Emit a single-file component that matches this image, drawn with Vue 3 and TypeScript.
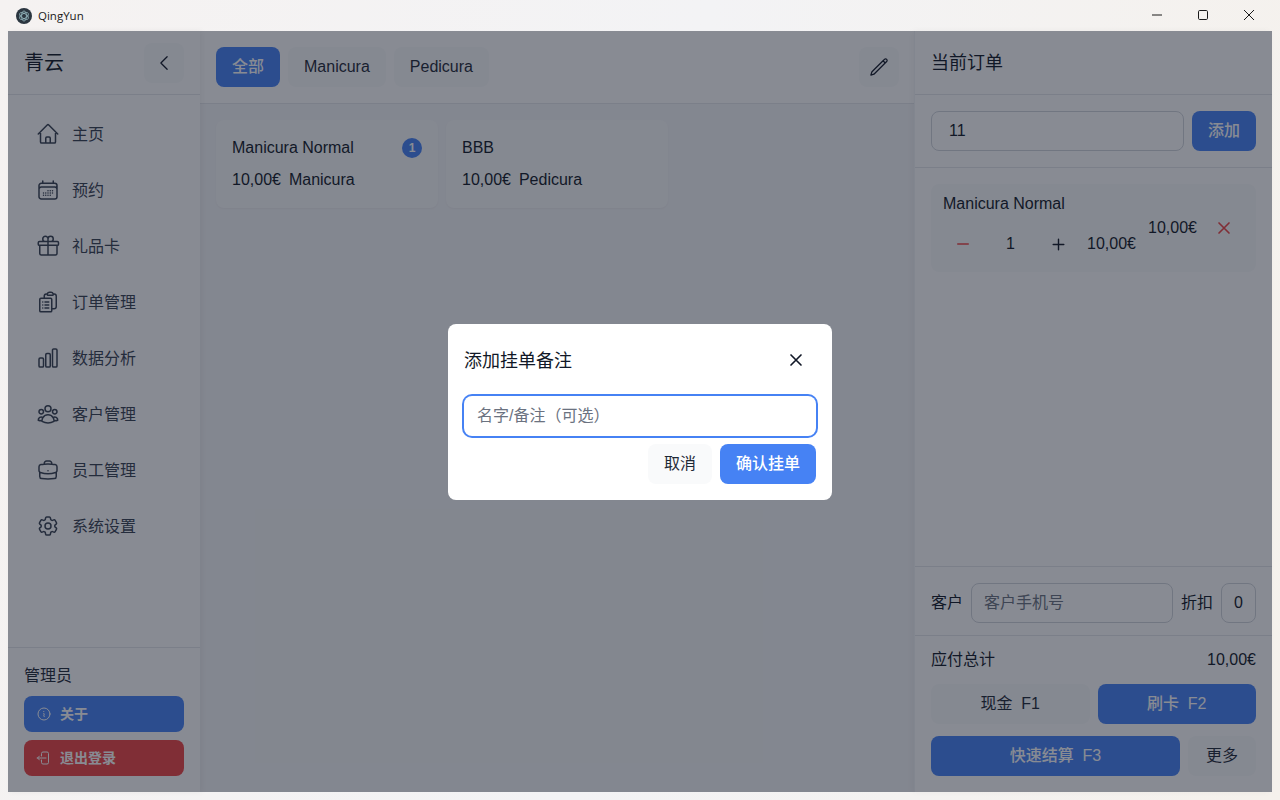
<template>
  <div class="window">
    <div class="titlebar">
      <svg class="logo" viewBox="0 0 16 16">
        <circle cx="8" cy="8" r="8" fill="#2b3640" />
        <g fill="none" stroke="#9fc4cc" stroke-width="0.7">
          <ellipse cx="8" cy="8" rx="5" ry="2.4" transform="rotate(30 8 8)" />
          <ellipse cx="8" cy="8" rx="5" ry="2.4" transform="rotate(90 8 8)" />
          <ellipse cx="8" cy="8" rx="5" ry="2.4" transform="rotate(150 8 8)" />
        </g>
      </svg>
      <span class="app-name">QingYun</span>
      <div class="win-controls">
        <svg viewBox="0 0 12 12"><path d="M1 6h10" /></svg>
        <svg viewBox="0 0 12 12"><rect x="1.5" y="1.5" width="9" height="9" rx="1.2" /></svg>
        <svg viewBox="0 0 12 12"><path d="M1 1l10 10M11 1 1 11" /></svg>
      </div>
    </div>

    <div class="app">
      <aside class="sidebar">
        <div class="side-head">
          <span class="brand">青云</span>
          <button class="icon-btn">
            <svg class="ico i20" viewBox="0 0 24 24"><path :d="icons.chevron" /></svg>
          </button>
        </div>
        <nav class="nav">
          <a v-for="item in navItems" :key="item.label" class="nav-item">
            <svg class="ico i24" viewBox="0 0 24 24"><path :d="item.icon" /></svg>
            <span class="tx">{{ item.label }}</span>
          </a>
        </nav>
        <div class="side-foot">
          <div class="role">管理员</div>
          <button class="foot-btn blue">
            <svg class="ico i16" viewBox="0 0 24 24"><path :d="icons.info" /></svg>
            <span class="tx">关于</span>
          </button>
          <button class="foot-btn red">
            <svg class="ico i16" viewBox="0 0 24 24"><path :d="icons.logout" /></svg>
            <span class="tx">退出登录</span>
          </button>
        </div>
      </aside>

      <main class="main">
        <div class="tabs">
          <button class="chip active">全部</button>
          <button class="chip">Manicura</button>
          <button class="chip">Pedicura</button>
          <button class="icon-btn push">
            <svg class="ico i20" viewBox="0 0 24 24"><path :d="icons.pencil" /></svg>
          </button>
        </div>
        <div class="grid">
          <div v-for="p in products" :key="p.name" class="card">
            <div class="card-title">
              <span>{{ p.name }}</span>
              <span v-if="p.count" class="badge">{{ p.count }}</span>
            </div>
            <div class="card-sub">
              <span>{{ p.price }}</span>
              <span>{{ p.category }}</span>
            </div>
          </div>
        </div>
      </main>

      <section class="order">
        <div class="order-head">当前订单</div>
        <div class="add-row">
          <div class="field grow val">11</div>
          <button class="btn primary w64">添加</button>
        </div>
        <div class="order-list">
          <div class="line">
            <div class="line-left">
              <div class="line-name">Manicura Normal</div>
              <div class="qty">
                <span class="qty-btn danger">
                  <svg class="ico i18 bold" viewBox="0 0 24 24"><path :d="icons.minus" /></svg>
                </span>
                <span class="qty-val">1</span>
                <span class="qty-btn">
                  <svg class="ico i17 bold" viewBox="0 0 24 24"><path :d="icons.plus" /></svg>
                </span>
                <span class="unit">10,00€</span>
              </div>
            </div>
            <span class="line-total">10,00€</span>
            <span class="qty-btn danger">
              <svg class="ico i20 bold" viewBox="0 0 24 24"><path :d="icons.close" /></svg>
            </span>
          </div>
        </div>
        <div class="cust-row">
          <span class="lift">客户</span>
          <div class="field grow hint">客户手机号</div>
          <span class="lift">折扣</span>
          <div class="field small">0</div>
        </div>
        <div class="pay">
          <div class="total">
            <span>应付总计</span>
            <span>10,00€</span>
          </div>
          <div class="pay-row even">
            <button class="btn ghost">现金&nbsp;&nbsp;F1</button>
            <button class="btn primary">刷卡&nbsp;&nbsp;F2</button>
          </div>
          <div class="pay-row">
            <button class="btn primary grow">快速结算&nbsp;&nbsp;F3</button>
            <button class="btn ghost w68">更多</button>
          </div>
        </div>
      </section>

      <div class="overlay">
        <div class="dialog">
          <div class="dialog-head">
            <span class="tx">添加挂单备注</span>
            <button class="close-btn">
              <svg class="ico i20 bold" viewBox="0 0 24 24"><path :d="icons.close" /></svg>
            </button>
          </div>
          <input class="note" placeholder="名字/备注（可选）" />
          <div class="dialog-foot">
            <button class="btn ghost w64">取消</button>
            <button class="btn primary w96">确认挂单</button>
          </div>
        </div>
      </div>
    </div>
  </div>
</template>

<script setup lang="ts">
const icons = {
  chevron: 'M15.75 19.5 8.25 12l7.5-7.5',
  pencil:
    'm16.862 4.487 1.687-1.688a1.875 1.875 0 1 1 2.652 2.652L6.832 19.82a4.5 4.5 0 0 1-1.897 1.13l-2.685.8.8-2.685a4.5 4.5 0 0 1 1.13-1.897L16.863 4.487Zm0 0L19.5 7.125',
  close: 'M6 18 18 6M6 6l12 12',
  minus: 'M5 12h14',
  plus: 'M12 4.5v15m7.5-7.5h-15',
  info: 'm11.25 11.25.041-.02a.75.75 0 0 1 1.063.852l-.708 2.836a.75.75 0 0 0 1.063.853l.041-.021M21 12a9 9 0 1 1-18 0 9 9 0 0 1 18 0Zm-9-3.75h.008v.008H12V8.25Z',
  logout:
    'M8.25 9V5.25A2.25 2.25 0 0 1 10.5 3h6a2.25 2.25 0 0 1 2.25 2.25v13.5A2.25 2.25 0 0 1 16.5 21h-6a2.25 2.25 0 0 1-2.25-2.25V15m-3 0-3-3m0 0 3-3m-3 3H15',
}

const navItems = [
  {
    label: '主页',
    icon: 'm2.25 12 8.954-8.955c.44-.439 1.152-.439 1.591 0L21.75 12M4.5 9.75v10.125c0 .621.504 1.125 1.125 1.125H9.75v-4.875c0-.621.504-1.125 1.125-1.125h2.25c.621 0 1.125.504 1.125 1.125V21h4.125c.621 0 1.125-.504 1.125-1.125V9.75M8.25 21h8.25',
  },
  {
    label: '预约',
    icon: 'M6.75 3v2.25M17.25 3v2.25M3 18.75V7.5a2.25 2.25 0 0 1 2.25-2.25h13.5A2.25 2.25 0 0 1 21 7.5v11.25m-18 0A2.25 2.25 0 0 0 5.25 21h13.5A2.25 2.25 0 0 0 21 18.75m-18 0v-7.5A2.25 2.25 0 0 1 5.25 9h13.5A2.25 2.25 0 0 1 21 11.25v7.5m-9-6h.008v.008H12v-.008ZM12 15h.008v.008H12V15Zm0 2.25h.008v.008H12v-.008ZM9.75 15h.008v.008H9.75V15Zm0 2.25h.008v.008H9.75v-.008ZM7.5 15h.008v.008H7.5V15Zm0 2.25h.008v.008H7.5v-.008Zm6.75-4.5h.008v.008h-.008v-.008Zm0 2.25h.008v.008h-.008V15Zm0 2.25h.008v.008h-.008v-.008Zm2.25-4.5h.008v.008H16.5v-.008Zm0 2.25h.008v.008H16.5V15Z',
  },
  {
    label: '礼品卡',
    icon: 'M21 11.25v8.25a1.5 1.5 0 0 1-1.5 1.5H5.25a1.5 1.5 0 0 1-1.5-1.5v-8.25M12 4.875A2.625 2.625 0 1 0 9.375 7.5H12m0-2.625V7.5m0-2.625A2.625 2.625 0 1 1 14.625 7.5H12m0 0V21m-8.625-9.75h18c.621 0 1.125-.504 1.125-1.125v-1.5c0-.621-.504-1.125-1.125-1.125h-18c-.621 0-1.125.504-1.125 1.125v1.5c0 .621.504 1.125 1.125 1.125Z',
  },
  {
    label: '订单管理',
    icon: 'M9 12h3.75M9 15h3.75M9 18h3.75m3 .75H18a2.25 2.25 0 0 0 2.25-2.25V6.108c0-1.135-.845-2.098-1.976-2.192a48.424 48.424 0 0 0-1.123-.08m-5.801 0c-.065.21-.1.433-.1.664 0 .414.336.75.75.75h4.5a.75.75 0 0 0 .75-.75 2.25 2.25 0 0 0-.1-.664m-5.8 0A2.251 2.251 0 0 1 13.5 2.25H15c1.012 0 1.867.668 2.15 1.586m-5.8 0c-.376.023-.75.05-1.124.08C9.095 4.01 8.25 4.973 8.25 6.108V8.25m0 0H4.875c-.621 0-1.125.504-1.125 1.125v11.25c0 .621.504 1.125 1.125 1.125h9.75c.621 0 1.125-.504 1.125-1.125V9.375c0-.621-.504-1.125-1.125-1.125H8.25ZM6.75 12h.008v.008H6.75V12Zm0 3h.008v.008H6.75V15Zm0 3h.008v.008H6.75V18Z',
  },
  {
    label: '数据分析',
    icon: 'M3 13.125C3 12.504 3.504 12 4.125 12h2.25c.621 0 1.125.504 1.125 1.125v6.75C7.5 20.496 6.996 21 6.375 21h-2.25A1.125 1.125 0 0 1 3 19.875v-6.75ZM9.75 8.625c0-.621.504-1.125 1.125-1.125h2.25c.621 0 1.125.504 1.125 1.125v11.25c0 .621-.504 1.125-1.125 1.125h-2.25a1.125 1.125 0 0 1-1.125-1.125V8.625ZM16.5 4.125c0-.621.504-1.125 1.125-1.125h2.25C20.496 3 21 3.504 21 4.125v15.75c0 .621-.504 1.125-1.125 1.125h-2.25a1.125 1.125 0 0 1-1.125-1.125V4.125Z',
  },
  {
    label: '客户管理',
    icon: 'M18 18.72a9.094 9.094 0 0 0 3.741-.479 3 3 0 0 0-4.682-2.72m.94 3.198.001.031c0 .225-.012.447-.037.666A11.944 11.944 0 0 1 12 21c-2.17 0-4.207-.576-5.963-1.584A6.062 6.062 0 0 1 6 18.719m12 0a5.971 5.971 0 0 0-.941-3.197m0 0A5.995 5.995 0 0 0 12 12.75a5.995 5.995 0 0 0-5.058 2.772m0 0a3 3 0 0 0-4.681 2.72 8.986 8.986 0 0 0 3.74.477m.94-3.197a5.971 5.971 0 0 0-.94 3.197M15 6.75a3 3 0 1 1-6 0 3 3 0 0 1 6 0Zm6 3a2.25 2.25 0 1 1-4.5 0 2.25 2.25 0 0 1 4.5 0Zm-13.5 0a2.25 2.25 0 1 1-4.5 0 2.25 2.25 0 0 1 4.5 0Z',
  },
  {
    label: '员工管理',
    icon: 'M20.25 14.15v4.25c0 1.094-.787 2.036-1.872 2.18-2.087.277-4.216.42-6.378.42s-4.291-.143-6.378-.42c-1.085-.144-1.872-1.086-1.872-2.18v-4.25m16.5 0a2.18 2.18 0 0 0 .75-1.661V8.706c0-1.081-.768-2.015-1.837-2.175a48.114 48.114 0 0 0-3.413-.387m4.5 8.006c-.194.165-.42.295-.673.38A23.978 23.978 0 0 1 12 15.75c-2.648 0-5.195-.429-7.577-1.22a2.016 2.016 0 0 1-.673-.38m0 0A2.18 2.18 0 0 1 3 12.489V8.706c0-1.081.768-2.015 1.837-2.175a48.111 48.111 0 0 1 3.413-.387m7.5 0V5.25A2.25 2.25 0 0 0 13.5 3h-3a2.25 2.25 0 0 0-2.25 2.25v.894m7.5 0a48.667 48.667 0 0 0-7.5 0M12 12.75h.008v.008H12v-.008Z',
  },
  {
    label: '系统设置',
    icon: 'M9.594 3.94c.09-.542.56-.94 1.11-.94h2.593c.55 0 1.02.398 1.11.94l.213 1.281c.063.374.313.686.645.87.074.04.147.083.22.127.325.196.72.257 1.075.124l1.217-.456a1.125 1.125 0 0 1 1.37.49l1.296 2.247a1.125 1.125 0 0 1-.26 1.431l-1.003.827c-.293.241-.438.613-.43.992a7.723 7.723 0 0 1 0 .255c-.008.378.137.75.43.991l1.004.827c.424.35.534.955.26 1.43l-1.298 2.247a1.125 1.125 0 0 1-1.369.491l-1.217-.456c-.355-.133-.75-.072-1.076.124a6.47 6.47 0 0 1-.22.128c-.331.183-.581.495-.644.869l-.213 1.281c-.09.543-.56.94-1.11.94h-2.594c-.55 0-1.019-.398-1.11-.94l-.213-1.281c-.062-.374-.312-.686-.644-.87a6.52 6.52 0 0 1-.22-.127c-.325-.196-.72-.257-1.076-.124l-1.217.456a1.125 1.125 0 0 1-1.369-.49l-1.297-2.247a1.125 1.125 0 0 1 .26-1.431l1.004-.827c.292-.24.437-.613.43-.991a6.932 6.932 0 0 1 0-.255c.007-.38-.138-.751-.43-.992l-1.004-.827a1.125 1.125 0 0 1-.26-1.43l1.297-2.247a1.125 1.125 0 0 1 1.37-.491l1.216.456c.356.133.751.072 1.076-.124.072-.044.146-.086.22-.128.332-.183.582-.495.644-.869l.214-1.28Z M15 12a3 3 0 1 1-6 0 3 3 0 0 1 6 0Z',
  },
]

const products = [
  { name: 'Manicura Normal', price: '10,00€', category: 'Manicura', count: 1 },
  { name: 'BBB', price: '10,00€', category: 'Pedicura', count: 0 },
]
</script>

<style scoped>
.window {
  height: 800px;
  display: flex;
  flex-direction: column;
  padding: 0 8px 8px;
  box-sizing: border-box;
  background: linear-gradient(100deg, #f5f2f1 0%, #f3f3f5 50%, #f5f1ec 100%);
  color: #111827;
  font-family: "Liberation Sans", "Noto Sans CJK SC", sans-serif;
  font-size: 16px;
  overflow: hidden;
}

.titlebar {
  height: 31px;
  flex: none;
  display: flex;
  align-items: center;
  padding-left: 8px;
}
.logo {
  width: 16px;
  height: 16px;
}
.app-name {
  margin-left: 6px;
  font: 11.5px "Open Sans", sans-serif;
  color: #1a1a1a;
}
.win-controls {
  margin-left: auto;
  display: flex;
}
.win-controls svg {
  width: 46px;
  height: 12px;
  margin-top: -1px;
  fill: none;
  stroke: #1a1a1a;
  stroke-width: 1;
}

.app {
  position: relative;
  flex: 1;
  min-height: 0;
  display: flex;
  background: #fff;
}

.ico {
  fill: none;
  stroke: currentColor;
  stroke-width: 1.5;
  stroke-linecap: round;
  stroke-linejoin: round;
  flex: none;
}
.ico.bold {
  stroke-width: 2;
}
.i16 { width: 16px; height: 16px; }
.i17 { width: 17px; height: 17px; }
.i18 { width: 18px; height: 18px; }
.i20 { width: 20px; height: 20px; }
.i24 { width: 24px; height: 24px; }

/* CJK 字形比 Latin 偏低，往上提一点 */
.tx { margin-bottom: 2px; }
.lift { margin-bottom: 4px; }

button {
  border: 0;
  font: inherit;
  padding: 0;
  color: inherit;
}

.sidebar {
  position: relative;
  z-index: 1;
  width: 192px;
  flex: none;
  display: flex;
  flex-direction: column;
  box-sizing: border-box;
  background: #fff;
  box-shadow: 2px 0 6px rgba(0, 0, 0, 0.05);
}
.side-head {
  height: 64px;
  flex: none;
  box-sizing: border-box;
  display: flex;
  align-items: center;
  justify-content: space-between;
  padding: 0 16px;
  border-bottom: 1px solid #e5e7eb;
}
.brand {
  font-size: 20px;
  margin-bottom: 2px;
}
.icon-btn {
  width: 40px;
  height: 40px;
  border-radius: 8px;
  background: #f9fafb;
  display: flex;
  align-items: center;
  justify-content: center;
}
.nav {
  flex: 1;
  padding: 15px 8px 0;
  display: flex;
  flex-direction: column;
  gap: 8px;
}
.nav-item {
  height: 48px;
  display: flex;
  align-items: center;
  gap: 12px;
  padding: 0 20px;
  color: #374151;
}
.side-foot {
  border-top: 1px solid #e5e7eb;
  padding: 16px;
  display: flex;
  flex-direction: column;
  gap: 8px;
}
.role {
  line-height: 24px;
  height: 24px;
  color: #1f2937;
}
.foot-btn {
  height: 36px;
  border-radius: 8px;
  display: flex;
  align-items: center;
  gap: 8px;
  padding: 0 12px;
  color: #fff;
  font-size: 14px;
  font-weight: 700;
}
.foot-btn.blue { background: #4682f4; }
.foot-btn.red { background: #ef4444; }

.main {
  flex: 1;
  min-width: 0;
  display: flex;
  flex-direction: column;
  background: #f5f6f8;
}
.tabs {
  height: 73px;
  flex: none;
  box-sizing: border-box;
  padding: 0 15px 0 16px;
  display: flex;
  align-items: center;
  gap: 8px;
  background: #fff;
  border-bottom: 1px solid #e5e7eb;
}
.push {
  margin-left: auto;
}
.chip {
  height: 40px;
  padding: 0 16px;
  border-radius: 8px;
  background: #f9fafb;
  color: #1f2937;
}
.chip.active {
  background: #4682f4;
  color: #fff;
  font-weight: 500;
  padding-bottom: 4px;
}
.grid {
  display: grid;
  grid-template-columns: repeat(3, 1fr);
  gap: 8px;
  padding: 16px;
}
.card {
  height: 88px;
  box-sizing: border-box;
  padding: 16px;
  background: #f9fafb;
  border-radius: 8px;
  box-shadow: 0 1px 2px rgba(0, 0, 0, 0.04);
  display: flex;
  flex-direction: column;
  gap: 8px;
}
.card-title {
  display: flex;
  align-items: center;
  justify-content: space-between;
  height: 24px;
}
.card-sub {
  display: flex;
  gap: 8px;
  line-height: 24px;
}
.badge {
  width: 20px;
  height: 20px;
  border-radius: 50%;
  background: #4682f4;
  color: #fff;
  font-size: 12px;
  font-weight: 700;
  display: flex;
  align-items: center;
  justify-content: center;
}

.order {
  position: relative;
  z-index: 1;
  width: 358px;
  flex: none;
  display: flex;
  flex-direction: column;
  border-left: 1px solid #f3f4f6;
  box-sizing: border-box;
  background: #fff;
  box-shadow: -2px 0 6px rgba(0, 0, 0, 0.04);
}
.order-head {
  height: 64px;
  flex: none;
  box-sizing: border-box;
  padding: 0 0 4px 16px;
  display: flex;
  align-items: center;
  font-size: 18px;
  border-bottom: 1px solid #e5e7eb;
}
.add-row {
  display: flex;
  gap: 8px;
  padding: 16px;
  border-bottom: 1px solid #e5e7eb;
}
.field {
  height: 40px;
  box-sizing: border-box;
  border: 1px solid #d1d5db;
  border-radius: 8px;
  display: flex;
  align-items: center;
  padding: 0 12px;
}
.field.val {
  padding-left: 17px;
}
.field.hint {
  color: #6b7280;
  padding-bottom: 4px;
}
.field.small {
  width: 35px;
  padding: 0;
  justify-content: center;
}
.grow {
  flex: 1;
  min-width: 0;
}
.btn {
  height: 40px;
  box-sizing: border-box;
  padding-bottom: 4px;
  border-radius: 8px;
  display: flex;
  align-items: center;
  justify-content: center;
  flex: none;
}
.btn.grow { flex: 1; }
.primary {
  background: #4682f4;
  color: #fff;
  font-weight: 500;
}
.ghost {
  background: #f9fafb;
  color: #1f2937;
}
.w64 { width: 64px; }
.w68 { width: 68px; }
.w96 { width: 96px; }

.order-list {
  flex: 1;
  padding: 16px;
}
.line {
  height: 88px;
  box-sizing: border-box;
  background: #f9fafb;
  border-radius: 8px;
  padding: 0 12px;
  display: flex;
  align-items: center;
}
.line-left {
  width: 193px;
  flex: none;
}
.line-name {
  line-height: 24px;
  height: 24px;
  margin-bottom: 8px;
}
.qty {
  display: flex;
  align-items: center;
  height: 40px;
}
.qty-btn {
  width: 40px;
  height: 40px;
  display: flex;
  align-items: center;
  justify-content: center;
  flex: none;
}
.danger { color: #ef4444; }
.qty-val {
  width: 57px;
  text-align: center;
}
.unit { margin-left: 9px; }
.line-total {
  margin-left: 12px;
  margin-right: 7px;
}
.cust-row {
  display: flex;
  align-items: center;
  gap: 8px;
  padding: 16px 16px 12px;
  border-top: 1px solid #e5e7eb;
  border-bottom: 1px solid #e5e7eb;
}
.pay {
  padding: 12px 16px 16px;
  display: flex;
  flex-direction: column;
  gap: 12px;
}
.total {
  display: flex;
  justify-content: space-between;
  line-height: 24px;
  height: 24px;
}
.pay-row {
  display: flex;
  gap: 8px;
}
.pay-row.even .btn {
  flex: 1;
}

.overlay {
  position: absolute;
  z-index: 2;
  inset: 0;
  background: rgba(17, 24, 39, 0.5);
  display: flex;
  align-items: center;
  justify-content: center;
}
.dialog {
  width: 384px;
  box-sizing: border-box;
  padding: 16px;
  background: #fff;
  border-radius: 8px;
  display: flex;
  flex-direction: column;
}
.dialog-head {
  display: flex;
  align-items: center;
  justify-content: space-between;
  height: 40px;
  font-size: 18px;
  margin-bottom: 16px;
}
.close-btn {
  width: 40px;
  height: 40px;
  background: transparent;
  display: flex;
  align-items: center;
  justify-content: center;
}
.note {
  height: 40px;
  box-sizing: border-box;
  width: 100%;
  border: 1px solid transparent;
  border-radius: 8px;
  box-shadow: 0 0 0 2px #4682f4;
  outline: none;
  padding: 0 12px;
  font: inherit;
  margin-bottom: 8px;
}
.note::placeholder {
  color: #6b7280;
}
.dialog-foot {
  display: flex;
  justify-content: flex-end;
  gap: 8px;
}
</style>
